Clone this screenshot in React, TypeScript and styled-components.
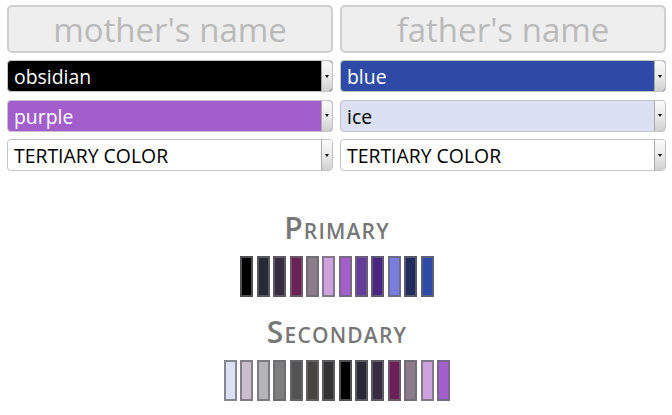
import React from 'react';
import styled, { createGlobalStyle } from 'styled-components';

interface Pick {
  label: string;
  bg: string;
  fg: string;
}

const GlobalStyle = createGlobalStyle`
  html, body {
    margin: 0;
    padding: 0;
    background: #fff;
    font-family: "Open Sans", "Liberation Sans", sans-serif;
  }
`

const Page = styled.div`
  width: 672px;
  height: 415px;
  padding: 5px 6px 0 7px;
  box-sizing: border-box;
  overflow: hidden;
`

const Parents = styled.div`
  display: grid;
  grid-template-columns: 1fr 1fr;
  column-gap: 7px;
`

const Parent = styled.div`
  display: flex;
  flex-direction: column;
  gap: 7.5px;
`

const NameBox = styled.div`
  height: 48px;
  box-sizing: border-box;
  border: 2px solid #cfcfcf;
  border-radius: 5px;
  background-color: #eee;
  color: #bababa;
  font-size: 33px;
  line-height: 46px;
  text-align: center;
  white-space: nowrap;
  overflow: hidden;
  margin-bottom: -0.5px;
`

const Select = styled.div<{ bg: string; fg: string }>`
  display: flex;
  height: 32px;
  box-sizing: border-box;
  border: 1px solid #c4c4c4;
  border-radius: 4px;
  background-color: ${(props) => props.bg};
  color: ${(props) => props.fg};
  overflow: hidden;
`

const SelectLabel = styled.span`
  flex: 1;
  padding-left: 6px;
  font-size: 19.4px;
  line-height: 31px;
  white-space: nowrap;
`

const ArrowButton = styled.span`
  width: 10px;
  display: flex;
  align-items: center;
  justify-content: center;
  border-left: 1px solid #a9a9a9;
  border-radius: 0 3px 3px 0;
  background: linear-gradient(to bottom, #fbfbfb, #e6e6e6 60%, #cfcfcf);

  &::after {
    content: '';
    border-top: 3px solid #111;
    border-left: 2px solid transparent;
    border-right: 2px solid transparent;
  }
`

const Palette = styled.section<{ top: number }>`
  display: flex;
  flex-direction: column;
  align-items: center;
  margin-top: ${(props) => props.top}px;
  padding-left: 1px;
`

const Heading = styled.h2`
  margin: 0 0 10px;
  font-size: 30px;
  line-height: 36px;
  font-weight: 600;
  font-variant: small-caps;
  letter-spacing: 1.2px;
  color: #777;
`

const Swatches = styled.div`
  display: flex;
  gap: 3.4px;
`

const Swatch = styled.div<{ color: string }>`
  width: 13px;
  height: 41px;
  box-sizing: border-box;
  border: 2px solid rgba(105, 105, 110, 0.75);
  background-color: ${(props) => props.color};
`

const mother: Pick[] = [
  { label: 'obsidian', bg: '#000', fg: '#fff' },
  { label: 'purple', bg: '#a25fcb', fg: '#fff' },
  { label: 'TERTIARY COLOR', bg: '#fff', fg: '#000' },
];

const father: Pick[] = [
  { label: 'blue', bg: '#2f4aa6', fg: '#fff' },
  { label: 'ice', bg: '#dbe0f2', fg: '#000' },
  { label: 'TERTIARY COLOR', bg: '#fff', fg: '#000' },
];

const primary = [
  '#000000', '#272a36', '#372c42', '#6b2158', '#8c7b8a', '#cda2df',
  '#a25fcb', '#643c9b', '#4a2682', '#7a7ddf', '#222b5e', '#2f4aa6',
];

const secondary = [
  '#dce0f4', '#c9bccd', '#b5b5b8', '#7e7e7e', '#535353', '#46453f', '#333333',
  '#000000', '#272a36', '#372c42', '#6b2158', '#8c7b8a', '#cda2df', '#a25fcb',
];

const ParentColumn: React.FC<{ name: string; picks: Pick[] }> = ({ name, picks }) => (
  <Parent>
    <NameBox>{name}</NameBox>
    {picks.map((p, i) => (
      <Select key={i} bg={p.bg} fg={p.fg}>
        <SelectLabel>{p.label}</SelectLabel>
        <ArrowButton />
      </Select>
    ))}
  </Parent>
);

const App: React.FC = () => {
  return (
    <Page>
      <GlobalStyle />
      <Parents>
        <ParentColumn name="mother's name" picks={mother} />
        <ParentColumn name="father's name" picks={father} />
      </Parents>
      <Palette top={39}>
        <Heading>Primary</Heading>
        <Swatches>
          {primary.map((c, i) => <Swatch key={i} color={c} />)}
        </Swatches>
      </Palette>
      <Palette top={17}>
        <Heading>Secondary</Heading>
        <Swatches>
          {secondary.map((c, i) => <Swatch key={i} color={c} />)}
        </Swatches>
      </Palette>
    </Page>
  );
};

export default App;
